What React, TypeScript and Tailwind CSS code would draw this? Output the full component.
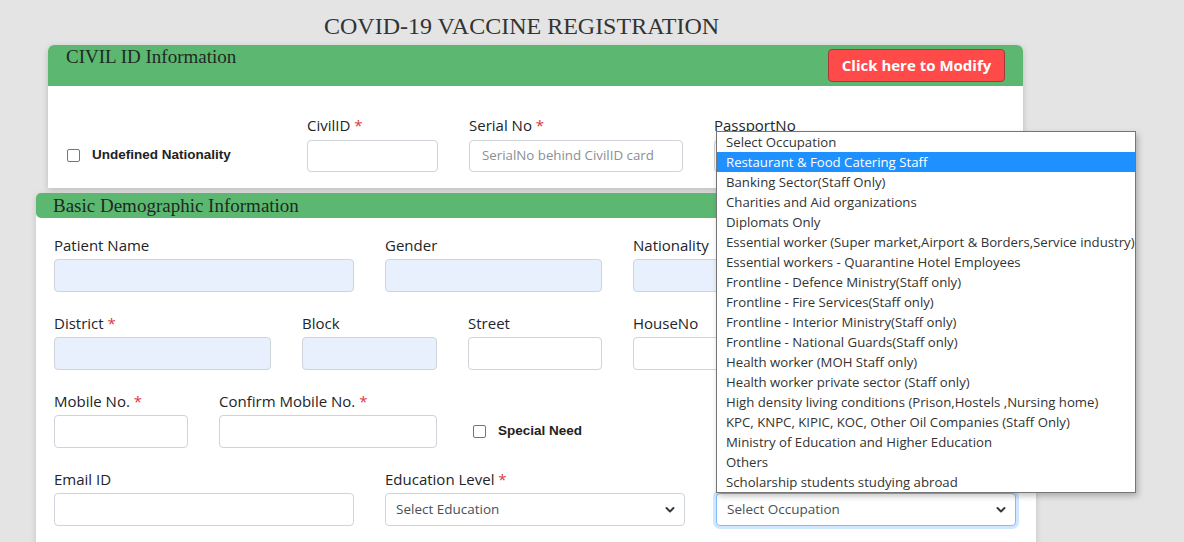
import React from "react";

const occupations = [
  "Select Occupation",
  "Restaurant & Food Catering Staff",
  "Banking Sector(Staff Only)",
  "Charities and Aid organizations",
  "Diplomats Only",
  "Essential worker (Super market,Airport & Borders,Service industry)",
  "Essential workers - Quarantine Hotel Employees",
  "Frontline - Defence Ministry(Staff only)",
  "Frontline - Fire Services(Staff only)",
  "Frontline - Interior Ministry(Staff only)",
  "Frontline - National Guards(Staff only)",
  "Health worker (MOH Staff only)",
  "Health worker private sector (Staff only)",
  "High density living conditions (Prison,Hostels ,Nursing home)",
  "KPC, KNPC, KIPIC, KOC, Other Oil Companies (Staff Only)",
  "Ministry of Education and Higher Education",
  "Others",
  "Scholarship students studying abroad",
];

const sans = "font-['Open_Sans',sans-serif]";

function Label({ text, req }: { text: string; req?: boolean }) {
  return (
    <div className={`${sans} text-[15px] leading-[22px] text-[#212529] whitespace-nowrap`}>
      {text}
      {req && <span className="text-[#dc3545]"> *</span>}
    </div>
  );
}

function Input({ w, blue, placeholder, h = "h-[33px]", mt = "mt-[3px]" }: { w: string; blue?: boolean; placeholder?: string; h?: string; mt?: string }) {
  return (
    <div
      className={`${w} ${h} ${mt} rounded-[4px] border border-[#ced4da] ${blue ? "bg-[#e8f0fe]" : "bg-white"} flex items-center px-[12px] ${sans} text-[13.3px] text-[#8a8f94] whitespace-nowrap overflow-hidden`}
    >
      {placeholder}
    </div>
  );
}

function Chevron() {
  return (
    <svg width="10" height="8" viewBox="0 0 10 8" className="shrink-0">
      <path d="M1.5 2 L5 5.5 L8.5 2" fill="none" stroke="#343a40" strokeWidth="2" strokeLinecap="round" strokeLinejoin="round" />
    </svg>
  );
}

function Select({ text, focus }: { text: string; focus?: boolean }) {
  return (
    <div
      className={`w-[300px] h-[33px] mt-[3px] rounded-[4px] border ${focus ? "border-[#80bdff] shadow-[0_0_0_3px_rgba(0,123,255,0.18)]" : "border-[#ced4da]"} bg-white flex items-center justify-between pl-[10px] pr-[9px] ${sans} text-[13.5px] text-[#495057]`}
    >
      <span>{text}</span>
      <Chevron />
    </div>
  );
}

function Check({ text, size }: { text: string; size: string }) {
  return (
    <div className="flex items-center">
      <div className="w-[13px] h-[13px] border border-[#767676] rounded-[2px] bg-white" />
      <span className={`ml-[12px] font-['Liberation_Sans',Arial,sans-serif] font-bold ${size} text-[#222]`}>{text}</span>
    </div>
  );
}

export default function App() {
  return (
    <div className="relative w-[1184px] h-[542px] bg-[#e4e4e4] overflow-hidden">
      <div className="pt-[12px] pb-[5px] pl-[324px] font-['Liberation_Serif',serif] text-[24px] leading-[28px] text-[#333] whitespace-nowrap">
        COVID-19 VACCINE REGISTRATION
      </div>

      {/* Card 1 */}
      <div className="ml-[48px] w-[975px] bg-white rounded-t-[6px] shadow-[0_2px_6px_rgba(0,0,0,0.18)]">
        <div className="h-[41px] bg-[#5cb870] rounded-t-[6px] flex items-start justify-between pl-[18px] pr-[18px]">
          <div className="pt-[0px] font-['Liberation_Serif',serif] text-[19px] leading-[24px] text-[#1e2a22]">CIVIL ID Information</div>
          <div className="mt-[4px] w-[177px] h-[33px] rounded-[4px] bg-[#ff4a4a] border border-[#a5393b] flex items-center justify-center font-['Open_Sans',sans-serif] font-bold text-[15px] text-white">
            Click here to Modify
          </div>
        </div>
        <div className="flex items-start pt-[28px] pb-[16px] pl-[19px] gap-[31px]">
          <div className="w-[209px] pt-[31px]">
            <Check text="Undefined Nationality" size="text-[13.5px]" />
          </div>
          <div>
            <Label text="CivilID" req />
            <Input w="w-[131px]" h="h-[32px]" mt="mt-[4px]" />
          </div>
          <div>
            <Label text="Serial No" req />
            <Input w="w-[214px]" h="h-[32px]" mt="mt-[4px]" placeholder="SerialNo behind CivilID card" />
          </div>
          <div>
            <Label text="PassportNo" />
            <Input w="w-[214px]" h="h-[32px]" mt="mt-[4px]" />
          </div>
        </div>
      </div>

      {/* Card 2 */}
      <div className="mt-[5px] ml-[36px] w-[1000px] h-[400px] bg-white rounded-[5px] shadow-[0_2px_6px_rgba(0,0,0,0.15)]">
        <div className="h-[25px] bg-[#5cb870] rounded-[5px] pl-[17px] font-['Liberation_Serif',serif] text-[19px] leading-[25px] text-[#1e2a22]">
          Basic Demographic Information
        </div>
        <div className="pl-[18px] pt-[16px] flex flex-col gap-[20px]">
          <div className="flex gap-[31px]">
            <div>
              <Label text="Patient Name" />
              <Input w="w-[300px]" blue />
            </div>
            <div>
              <Label text="Gender" />
              <Input w="w-[217px]" blue />
            </div>
            <div>
              <Label text="Nationality" />
              <Input w="w-[217px]" blue />
            </div>
          </div>
          <div className="flex gap-[31px]">
            <div>
              <Label text="District" req />
              <Input w="w-[217px]" blue />
            </div>
            <div>
              <Label text="Block" />
              <Input w="w-[135px]" blue />
            </div>
            <div>
              <Label text="Street" />
              <Input w="w-[134px]" />
            </div>
            <div>
              <Label text="HouseNo" />
              <Input w="w-[134px]" />
            </div>
          </div>
          <div className="flex gap-[31px]">
            <div>
              <Label text="Mobile No." req />
              <Input w="w-[134px]" />
            </div>
            <div>
              <Label text="Confirm Mobile No." req />
              <Input w="w-[218px]" />
            </div>
            <div className="pt-[31px] pl-[5px]">
              <Check text="Special Need" size="text-[13.5px]" />
            </div>
          </div>
          <div className="flex gap-[31px]">
            <div>
              <Label text="Email ID" />
              <Input w="w-[300px]" />
            </div>
            <div>
              <Label text="Education Level" req />
              <Select text="Select Education" />
            </div>
            <div>
              <div className="h-[22px]" />
              <Select text="Select Occupation" focus />
            </div>
          </div>
        </div>
      </div>

      {/* Open dropdown list */}
      <div className="absolute left-[716px] top-[131px] w-[420px] border border-[#767676] bg-white shadow-[2px_3px_6px_rgba(0,0,0,0.25)]">
        {occupations.map((o, i) => (
          <div
            key={o}
            className={`h-[20px] pl-[9px] leading-[20px] ${sans} text-[13.2px] whitespace-nowrap ${i === 1 ? "bg-[#1e90ff] text-white" : "text-[#333]"}`}
          >
            {o}
          </div>
        ))}
      </div>
    </div>
  );
}
